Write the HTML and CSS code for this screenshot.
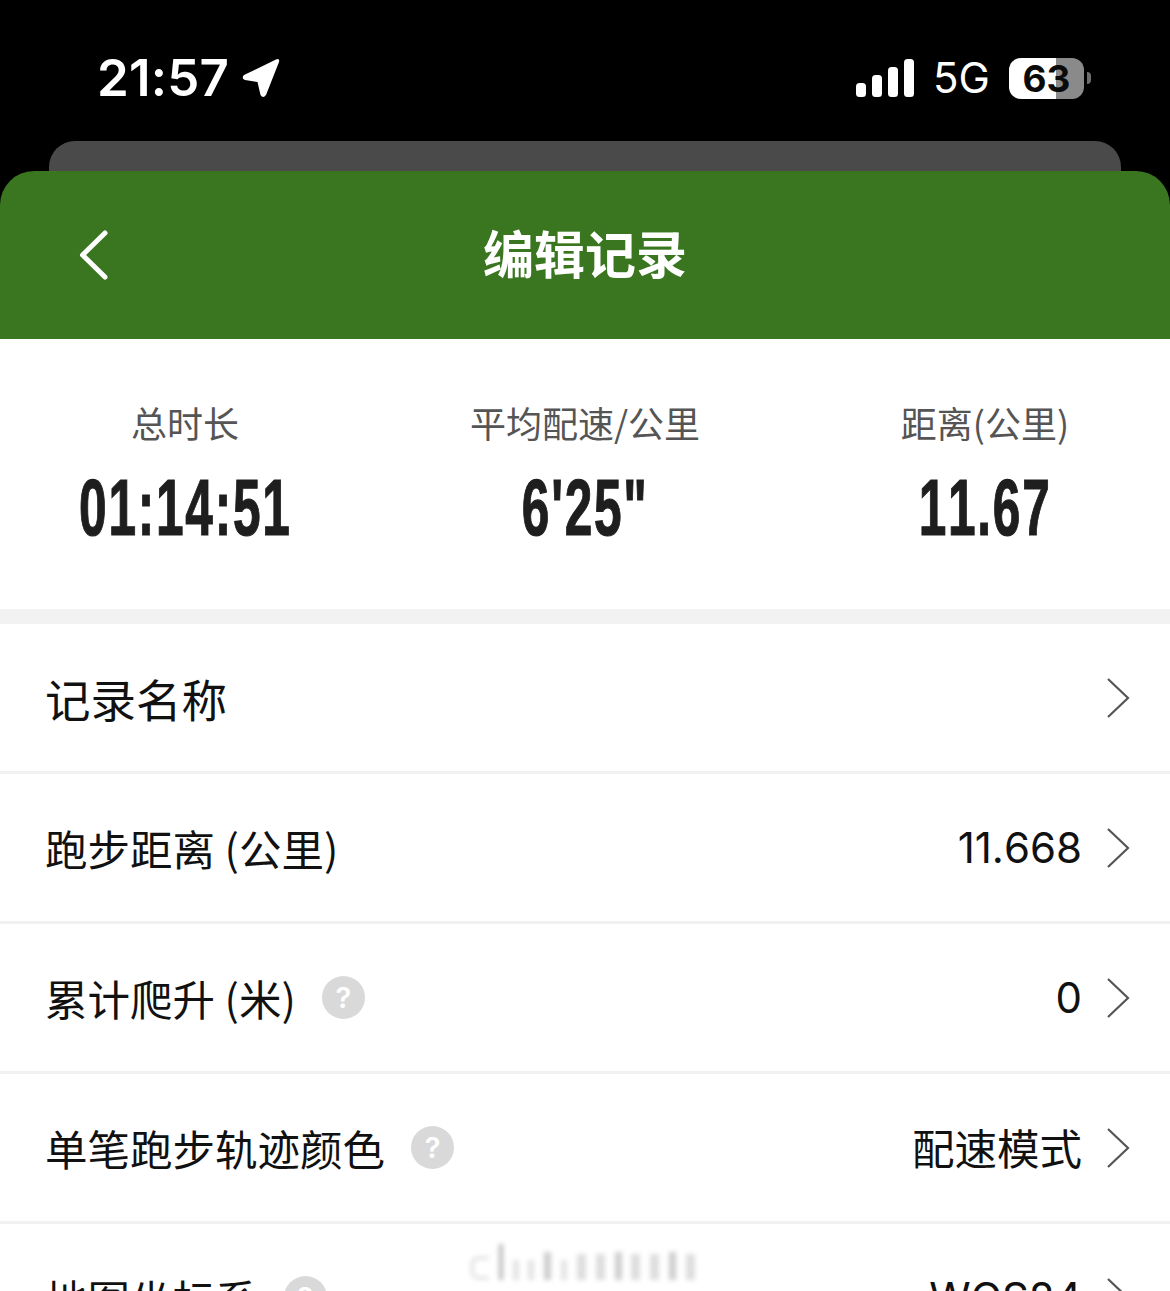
FILE: index.html
```html
<!DOCTYPE html>
<html lang="zh">
<head>
<meta charset="utf-8">
<title>编辑记录</title>
<link rel="stylesheet" href="styles.css">
</head>
<body>
<div class="page">
  <div class="top">
    <header class="status">
      <div class="status-left">
        <span class="time">21:57</span>
        <svg class="loc" viewBox="0 0 38 40"><path d="M2 17 34 1.500Q38 0 37 4L24 37Q21 41 18.500 37L15.500 24 3 22Q-1 20 2 17Z" fill="#fff"/></svg>
      </div>
      <div class="status-right">
        <svg class="signal" viewBox="0 0 58 38"><rect x="0" y="24" width="10" height="14" rx="3.500"/><rect x="16" y="16" width="10" height="22" rx="3.500"/><rect x="32" y="8" width="10" height="30" rx="3.500"/><rect x="48" y="0" width="10" height="38" rx="3.500"/></svg>
        <span class="net">5G</span>
        <div class="battery"><span class="battery-num">63</span></div>
        <span class="nub"></span>
      </div>
    </header>
    <div class="peek"></div>
    <div class="nav">
      <svg class="back" viewBox="0 0 30 50"><path d="M26 3 3.500 25 26 47" fill="none" stroke="#fff" stroke-width="5" stroke-linecap="round" stroke-linejoin="round"/></svg>
      <h1 class="title">编辑记录</h1>
    </div>
  </div>
  <section class="stats">
    <div class="stat"><div class="stat-label">总时长</div><div class="stat-value">01:14:51</div></div>
    <div class="stat"><div class="stat-label">平均配速/公里</div><div class="stat-value">6'25"</div></div>
    <div class="stat"><div class="stat-label">距离(公里)</div><div class="stat-value">11.67</div></div>
  </section>
  <ul class="list">
    <li class="row"><span class="row-label row-label-lg">记录名称</span><span class="row-value"></span><svg class="chev" viewBox="0 0 24 42"><path d="M2 2 22 21 2 40"/></svg></li>
    <li class="row"><span class="row-label">跑步距离 (公里)</span><span class="row-value">11.668</span><svg class="chev" viewBox="0 0 24 42"><path d="M2 2 22 21 2 40"/></svg></li>
    <li class="row"><span class="row-label">累计爬升 (米)</span><span class="help">?</span><span class="row-value">0</span><svg class="chev" viewBox="0 0 24 42"><path d="M2 2 22 21 2 40"/></svg></li>
    <li class="row"><span class="row-label">单笔跑步轨迹颜色</span><span class="help">?</span><span class="row-value row-value-cjk">配速模式</span><svg class="chev" viewBox="0 0 24 42"><path d="M2 2 22 21 2 40"/></svg></li>
    <li class="row"><span class="row-label">地图坐标系</span><span class="help">?</span><span class="row-value">WGS84</span><svg class="chev" viewBox="0 0 24 42"><path d="M2 2 22 21 2 40"/></svg></li>
  </ul>
  <div class="watermark" aria-hidden="true">
    <i class="wm wm-a"></i><i class="wm wm-b"></i><i class="wm wm-c"></i><i class="wm wm-c"></i><i class="wm wm-d"></i><i class="wm wm-c"></i><i class="wm wm-e"></i><i class="wm wm-e"></i><i class="wm wm-d"></i><i class="wm wm-e"></i><i class="wm wm-e"></i><i class="wm wm-d"></i><i class="wm wm-e"></i>
  </div>
</div>
</body>
</html>
```
FILE: styles.css
```css
* { box-sizing: border-box; }
html, body { margin: 0; padding: 0; height: 1291px; overflow: hidden; background: #fff; }
body { font-family: "Noto Sans CJK SC", "Liberation Sans", sans-serif; }
.page { position: relative; width: 1170px; height: 1291px; overflow: hidden; background: #fff; }

.top { background: #000; }
.status { height: 141px; display: flex; justify-content: space-between; align-items: flex-start; padding: 50px 79px 0 97px; color: #fff; }
.status-left { display: flex; align-items: center; gap: 13px; height: 56px; }
.time { font-family: Inter, "Liberation Sans", sans-serif; font-size: 51px; font-weight: 600; line-height: 56px; letter-spacing: 0.2px; }
.loc { width: 38px; height: 40px; }
.status-right { display: flex; align-items: center; height: 56px; }
.signal { width: 58px; height: 38px; fill: #fff; margin-right: 19px; }
.net { font-family: Inter, "Liberation Sans", sans-serif; font-size: 42px; line-height: 56px; width: 76px; }
.battery { width: 75px; height: 41px; border-radius: 12px; background: linear-gradient(90deg, #fff 0 47px, #8a8a8a 47px); display: flex; align-items: center; justify-content: center; }
.battery-num { font-family: Inter, "Liberation Sans", sans-serif; font-weight: 700; font-size: 37px; line-height: 41px; color: #0a0a0a; }
.nub { width: 4px; height: 12px; margin-left: 3px; background: #6e6e6e; border-radius: 0 6px 6px 0; }

.peek { height: 30px; margin: 0 49px; background: #4b4a4b; border-radius: 26px 26px 0 0; }

.nav { position: relative; height: 168px; background: #39761f; border-radius: 34px 34px 0 0; display: flex; align-items: center; justify-content: center; padding-bottom: 6px; }
.back { position: absolute; left: 79px; top: 59px; width: 30px; height: 50px; }
.title { margin: 0; font-size: 51px; font-weight: 700; line-height: 60px; color: #fff; }

.stats { height: 270px; display: flex; justify-content: space-between; padding: 61px 65px 0; background: #fff; }
.stat { width: 240px; display: flex; flex-direction: column; align-items: center; }
.stat-label { font-size: 36px; line-height: 44px; color: #555; white-space: nowrap; }
.stat-value { font-family: "Liberation Sans", sans-serif; font-weight: 700; font-size: 80px; line-height: 84px; letter-spacing: 2.800px; font-kerning: none; color: #1e1e1e; margin-top: 22px; transform: scaleX(0.62); -webkit-text-stroke: 1.200px #1e1e1e; white-space: nowrap; }

.list { margin: 0; padding: 0; list-style: none; border-top: 15px solid #f2f2f2; }
.row { height: 150px; display: flex; align-items: center; padding: 0 40px 0 45px; border-bottom: 3px solid #f1f1f1; }
.row-label { font-size: 42.500px; line-height: 60px; color: #111; white-space: nowrap; }
.row-label-lg { font-size: 45.500px; }
.row-value { margin-left: auto; font-family: Inter, "Noto Sans CJK SC", sans-serif; font-size: 42px; line-height: 60px; font-kerning: none; color: #111; white-space: nowrap; }
.row-value-cjk { padding-top: 4px; font-size: 42.500px; }
.help { width: 43px; height: 43px; margin-left: 26px; border-radius: 50%; background: #d9d9d9; color: #fff; font-family: Inter, "Liberation Sans", sans-serif; font-weight: 600; font-size: 29px; line-height: 43px; text-align: center; }
.chev { width: 24px; height: 42px; margin-left: 24px; fill: none; stroke: #555; stroke-width: 2.200; }

.watermark { position: absolute; left: 471px; top: 1244px; width: 224px; height: 36px; display: flex; align-items: flex-end; justify-content: space-between; filter: blur(2.500px); opacity: .7; }
.wm { display: block; background: #bdbdbd; }
.wm-a { width: 18px; height: 22px; background: transparent; border: 2px solid #bbb; border-right: 0; border-radius: 8px 0 0 8px; margin-bottom: 1px; }
.wm-b { width: 4px; height: 36px; background: #999; }
.wm-c { width: 6px; height: 20px; background: #d6d6d6; }
.wm-d { width: 7px; height: 28px; background: #b8b8b8; }
.wm-e { width: 9px; height: 26px; background: #cfcfcf; }
```
